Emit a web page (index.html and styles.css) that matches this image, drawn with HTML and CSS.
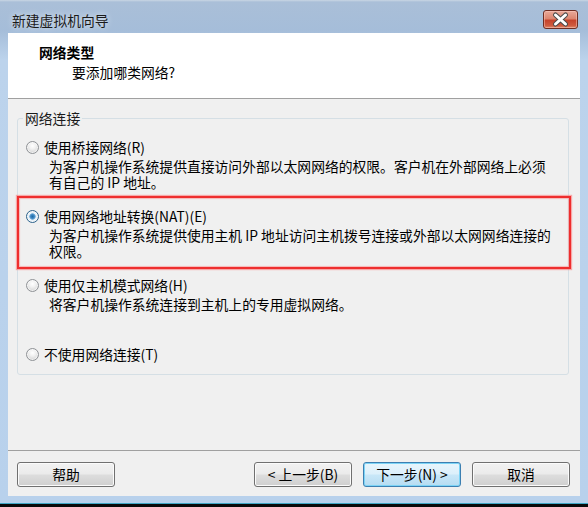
FILE: index.html
```html
<!DOCTYPE html>
<html lang="zh-CN">
<head>
<meta charset="utf-8">
<title>新建虚拟机向导</title>
<link rel="stylesheet" href="styles.css">
</head>
<body>
<div class="window">
  <div class="titlebar">
    <span class="title">新建虚拟机向导</span>
    <div class="close">
      <svg width="35" height="19" viewBox="0 0 35 19">
        <path d="M12.5 5 L22.5 14 M22.5 5 L12.5 14" stroke="#4a4a4a" stroke-width="5" stroke-linecap="round"/>
        <path d="M12.5 5 L22.5 14 M22.5 5 L12.5 14" stroke="#ffffff" stroke-width="3" stroke-linecap="round"/>
      </svg>
    </div>
  </div>
  <div class="client">
    <div class="header">
      <div class="h-title">网络类型</div>
      <div class="h-sub">要添加哪类网络?</div>
    </div>
    <div class="body">
      <fieldset class="group">
        <legend>网络连接</legend>
        <div class="options">
          <div class="option">
            <div class="opt-label"><span class="radio"></span>使用桥接网络(R)</div>
            <div class="opt-desc">为客户机操作系统提供直接访问外部以太网网络的权限。客户机在外部网络上必须<br>有自己的 IP 地址。</div>
          </div>
          <div class="option marked">
            <div class="highlight"></div>
            <div class="opt-label"><span class="radio checked"></span>使用网络地址转换(NAT)(E)</div>
            <div class="opt-desc">为客户机操作系统提供使用主机 IP 地址访问主机拨号连接或外部以太网网络连接的<br>权限。</div>
          </div>
          <div class="option">
            <div class="opt-label"><span class="radio"></span>使用仅主机模式网络(H)</div>
            <div class="opt-desc">将客户机操作系统连接到主机上的专用虚拟网络。</div>
          </div>
          <div class="option last">
            <div class="opt-label"><span class="radio"></span>不使用网络连接(T)</div>
          </div>
        </div>
      </fieldset>
    </div>
    <div class="footer">
      <button class="btn">帮助</button>
      <button class="btn push">&lt; 上一步(B)</button>
      <button class="btn default">下一步(N) &gt;</button>
      <button class="btn">取消</button>
    </div>
  </div>
  <div class="bottom-edge"></div>
</div>
</body>
</html>
```

FILE: styles.css
```css
* { box-sizing: border-box; }
html, body { margin: 0; padding: 0; }
body {
  width: 588px;
  height: 507px;
  overflow: hidden;
  font-family: "Noto Sans CJK SC", "Noto Sans", sans-serif;
  font-size: 13.8px;
  color: #000;
}
.window {
  width: 588px;
  height: 507px;
  display: flex;
  flex-direction: column;
  background: linear-gradient(#c9d6e4 0px, #aabfd8 2px, #a5bdd9 30px, #bcd3ec 60px, #b8d1ec 100%);
}
.titlebar {
  height: 33px;
  flex: none;
  display: flex;
  align-items: flex-start;
  justify-content: space-between;
  padding: 0 10px 0 12px;
}
.title {
  margin-top: 12px;
  line-height: 16px;
  color: #1a1a1a;
  text-shadow: 0 0 6px rgba(255,255,255,.8);
}
.close {
  margin-top: 10px;
  width: 35px;
  height: 19px;
  border: 1px solid #6e2d22;
  border-radius: 3px;
  background: linear-gradient(#e9a99a 0%, #dc8670 45%, #c6432b 55%, #cf5a3e 85%, #e08a6c 100%);
  box-shadow: inset 0 0 0 1px rgba(255,210,200,.45);
  display: flex;
  align-items: center;
  justify-content: center;
}
.close svg { display: block; margin: -1px; }
.client {
  flex: 1;
  margin: 0 8px;
  display: flex;
  flex-direction: column;
  background: #f0f0f0;
}
.header {
  height: 66px;
  flex: none;
  background: #fff;
  border-bottom: 1px solid #a0a0a0;
  padding: 11px 0 0 31px;
}
.h-title {
  font-weight: bold;
  line-height: 16px;
}
.h-sub {
  margin-top: 4px;
  margin-left: 33px;
  line-height: 16px;
}
.body {
  flex: 1;
  min-height: 0;
}
.group {
  margin: 11px 11px 0 9px;
  padding: 0 0 12px 0;
  border: 1px solid #d5dfe5;
  border-radius: 3px;
  min-inline-size: 0;
}
.group legend {
  margin-left: 5px;
  padding: 0 2px;
  line-height: 16px;
  color: #1a1a1a;
}
.options {
  padding: 13px 0 0 8px;
}
.option {
  height: 69px;
}
.option.last { height: auto; }
.option.marked { position: relative; }
.highlight {
  position: absolute;
  left: -9px;
  right: -3px;
  top: -12px;
  height: 73px;
  border: 2px solid #ee2e2e;
  box-shadow: 0 0 1px 1px rgba(255,110,110,.55), inset 0 0 1px 1px rgba(255,110,110,.45);
}
.opt-label {
  display: flex;
  align-items: center;
  height: 16px;
  line-height: 16px;
  white-space: nowrap;
}
.radio {
  width: 13px;
  height: 13px;
  flex: none;
  margin-right: 5px;
  border-radius: 50%;
  border: 1px solid #8f9296;
  background: radial-gradient(circle at 50% 35%, #ffffff 0%, #f1f1f1 35%, #d4d4d4 80%, #c8c8c8 100%);
  box-shadow: inset 0 0 0 1px rgba(255,255,255,.6);
}
.radio.checked {
  border-color: #2c628b;
  background: radial-gradient(circle at 50% 50%, #1d6aa8 0%, #3f88c2 25%, #7fb5de 38%, #e9f2f9 45%, #dfe6ec 100%);
}
.opt-desc {
  margin-top: 3px;
  padding-left: 23px;
  line-height: 16px;
  white-space: nowrap;
}
.footer {
  flex: none;
  border-top: 1px solid #a0a0a0;
  padding: 11px 10px 9px 9px;
  display: flex;
  gap: 11px;
}
.btn {
  width: 98px;
  height: 25px;
  padding: 0;
  border: 1px solid #707070;
  border-radius: 3px;
  background: linear-gradient(#f2f2f2 0%, #ebebeb 48%, #dddddd 52%, #cfcfcf 100%);
  box-shadow: inset 0 0 0 1px #fbfbfb;
  font-family: "Noto Sans CJK SC", "Noto Sans", sans-serif;
  font-size: 13.8px;
  line-height: 21px;
  color: #000;
}
.btn.push { margin-left: auto; }
.btn.default {
  border-color: #3c7fb1;
  background: linear-gradient(#e8f5fc 0%, #dcf0fb 48%, #c8e7f8 52%, #b6dcf2 100%);
  box-shadow: inset 0 0 0 1px #7cd4f6;
}
.bottom-edge {
  height: 4px;
  flex: none;
  margin-top: 7px;
  background: #0a0a0a;
  border-top: 1px solid #3fa6c4;
}
```
